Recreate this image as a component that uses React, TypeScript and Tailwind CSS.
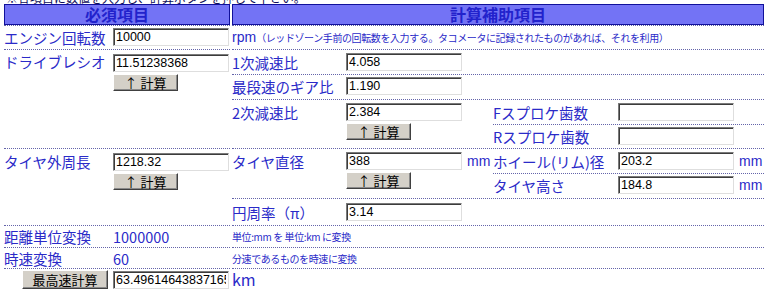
import React from 'react';

const dot = 'border-t border-dotted border-[#6464aa]';

function Field({ value = '' }: { value?: string }) {
  return (
    <input
      readOnly
      value={value}
      className="block w-[116px] h-[18px] px-[2px] border border-t-[#7a7a7a] border-l-[#7a7a7a] border-b-[#dedede] border-r-[#dedede] shadow-[inset_1px_1px_0_#3c3c3c] bg-white text-[12.5px] leading-none text-black font-['Liberation_Sans',sans-serif] outline-none"
    />
  );
}

function CalcButton({ label, wide }: { label: string; wide?: boolean }) {
  return (
    <button
      className={`${wide ? 'w-[86px] h-[19px]' : 'w-[65px] h-[17px] mt-[2px]'} flex items-center justify-center bg-[#d4d0c8] border border-t-white border-l-white border-b-[#404040] border-r-[#404040] shadow-[inset_-1px_-1px_0_#8a8a8a] text-[13px] leading-none text-black`}
    >
      {label}
    </button>
  );
}

function Label({ text, w }: { text: string; w: string }) {
  return <span className={`${w} shrink-0 text-[14.5px] leading-[19px] whitespace-nowrap`}>{text}</span>;
}

function Unit({ text }: { text: string }) {
  return <span className="ml-[5px] text-[14px] leading-[19px] font-['Liberation_Sans',sans-serif]">{text}</span>;
}

export default function App() {
  return (
    <div className="w-[768px] h-[293px] overflow-hidden bg-white font-['Noto_Sans_CJK_JP',sans-serif] text-[#2a2ac8]">
      <div className="h-[4px] overflow-hidden flex items-end pl-[6px]">
        <p className="text-[12px] leading-[13px] text-[#10105a] whitespace-nowrap">
          ※各項目に数値を入力し、計算ボタンを押して下さい。
        </p>
      </div>

      <div className="grid grid-cols-[226px_532px] gap-x-[2px] pl-[4px]">
        {/* header */}
        <div className="h-[21px] bg-[#7373f5] border border-[#10109a] text-center text-[16px] font-bold leading-[19px] text-[#2222cc]">
          必須項目
        </div>
        <div className="h-[21px] bg-[#7373f5] border border-[#10109a] text-center text-[16px] font-bold leading-[19px] text-[#2222cc]">
          計算補助項目
        </div>

        {/* engine rpm */}
        <div className={`${dot} h-[24px] pt-[2px] flex`}>
          <Label text="エンジン回転数" w="w-[109px]" />
          <Field value="10000" />
        </div>
        <div className={`${dot} h-[24px] flex items-center whitespace-nowrap`}>
          <span className="text-[14px] font-['Liberation_Sans',sans-serif]">rpm</span>
          <span className="text-[10px] tracking-[-0.4px]">
            （レッドゾーン手前の回転数を入力する。タコメータに記録されたものがあれば、それを利用）
          </span>
        </div>

        {/* drive ratio */}
        <div className={`${dot} h-[99px] pt-[2px] flex`}>
          <Label text="ドライブレシオ" w="w-[109px]" />
          <div className="pt-[2px]">
            <Field value="11.51238368" />
            <CalcButton label="↑ 計算" />
          </div>
        </div>
        <div className="h-[99px] flex flex-col">
          <div className={`${dot} h-[25px] pt-[3px] flex`}>
            <Label text="1次減速比" w="w-[114px]" />
            <Field value="4.058" />
          </div>
          <div className={`${dot} h-[25px] pt-[2px] flex`}>
            <Label text="最段速のギア比" w="w-[114px]" />
            <Field value="1.190" />
          </div>
          <div className={`${dot} h-[49px] flex`}>
            <div className="w-[261px] pt-[3px] flex">
              <Label text="2次減速比" w="w-[114px]" />
              <div>
                <Field value="2.384" />
                <CalcButton label="↑ 計算" />
              </div>
            </div>
            <div className="flex-1 flex flex-col">
              <div className="h-[24px] pt-[3px] flex">
                <Label text="Fスプロケ歯数" w="w-[125px]" />
                <Field />
              </div>
              <div className={`${dot} h-[24px] pt-[2px] flex`}>
                <Label text="Rスプロケ歯数" w="w-[125px]" />
                <Field />
              </div>
            </div>
          </div>
        </div>

        {/* tyre circumference */}
        <div className={`${dot} h-[77px] pt-[3px] flex`}>
          <Label text="タイヤ外周長" w="w-[109px]" />
          <div className="pt-[1px]">
            <Field value="1218.32" />
            <CalcButton label="↑ 計算" />
          </div>
        </div>
        <div className="h-[77px] flex flex-col">
          <div className={`${dot} h-[50px] flex`}>
            <div className="w-[261px] pt-[3px] flex">
              <Label text="タイヤ直径" w="w-[114px]" />
              <div>
                <Field value="388" />
                <CalcButton label="↑ 計算" />
              </div>
              <Unit text="mm" />
            </div>
            <div className="flex-1 flex flex-col">
              <div className="h-[24px] pt-[3px] flex">
                <Label text="ホイール(リム)径" w="w-[125px]" />
                <Field value="203.2" />
                <Unit text="mm" />
              </div>
              <div className={`${dot} h-[25px] pt-[2px] flex`}>
                <Label text="タイヤ高さ" w="w-[125px]" />
                <Field value="184.8" />
                <Unit text="mm" />
              </div>
            </div>
          </div>
          <div className={`${dot} h-[27px] pt-[4px] flex`}>
            <Label text="円周率（π）" w="w-[114px]" />
            <Field value="3.14" />
          </div>
        </div>

        {/* distance unit */}
        <div className={`${dot} h-[22px] flex items-center`}>
          <Label text="距離単位変換" w="w-[109px]" />
          <span className="text-[14.5px] leading-[19px]">1000000</span>
        </div>
        <div className={`${dot} h-[22px] flex items-center text-[10px] tracking-[-0.4px]`}>
          単位:mm を 単位:km に変換
        </div>

        {/* speed conversion */}
        <div className={`${dot} h-[21px] flex items-center`}>
          <Label text="時速変換" w="w-[109px]" />
          <span className="text-[14.5px] leading-[19px]">60</span>
        </div>
        <div className={`${dot} h-[21px] flex items-center text-[10px] tracking-[-0.4px]`}>
          分速であるものを時速に変換
        </div>

        {/* result */}
        <div className={`${dot} h-[25px] pt-[1px] flex`}>
          <div className="w-[109px] flex justify-end pr-[5px]">
            <CalcButton label="最高速計算" wide />
          </div>
          <div className="pt-[1px]">
            <Field value="63.4961464383716543" />
          </div>
        </div>
        <div className={`${dot} h-[25px] pt-[1px]`}>
          <span className="block text-[16px] leading-[18px]">km</span>
        </div>
      </div>
    </div>
  );
}
